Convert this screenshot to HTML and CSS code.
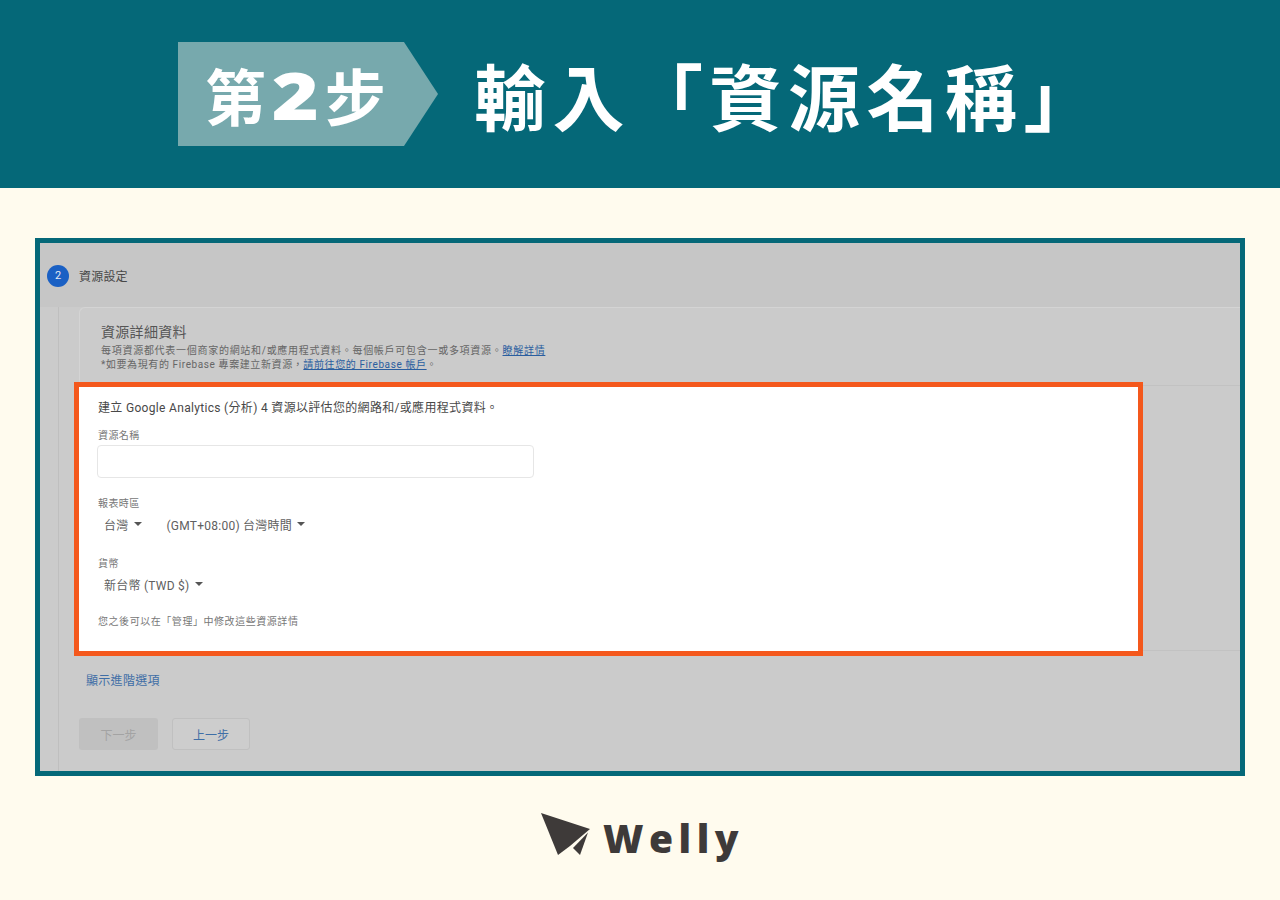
FILE: index.html
```html
<!DOCTYPE html>
<html lang="zh-Hant">
<head>
  <meta charset="UTF-8" />
  <meta name="viewport" content="width=device-width, initial-scale=1.0"/>
  <title>第2步 輸入「資源名稱」</title>
  <link rel="stylesheet" href="styles.css">
</head>
<body>
  <header class="banner">
    <div class="step-tag">第<span class="step-num">2</span>步</div>
    <h1 class="banner-title">輸入「資源名稱」</h1>
  </header>

  <main class="shot">
    <div class="step-row">
      <span class="step-circle">2</span>
      <span class="step-label">資源設定</span>
    </div>

    <div class="step-body">
      <section class="card">
        <div class="card-head">
          <h2>資源詳細資料</h2>
          <p>每項資源都代表一個商家的網站和/或應用程式資料。每個帳戶可包含一或多項資源。<a href="#">瞭解詳情</a></p>
          <p class="firebase-note">*如要為現有的 Firebase 專案建立新資源，<a href="#">請前往您的 Firebase 帳戶</a>。</p>
        </div>

        <div class="card-form">
          <div class="highlight">
            <p class="intro">建立 Google Analytics (分析) 4 資源以評估您的網路和/或應用程式資料。</p>

            <label class="field-label">資源名稱</label>
            <div class="text-input"></div>

            <label class="field-label tz-label">報表時區</label>
            <div class="select-row">
              <span class="select country">台灣<i class="caret"></i></span>
              <span class="select">(GMT+08:00) 台灣時間<i class="caret"></i></span>
            </div>

            <label class="field-label money-label">貨幣</label>
            <div class="select-row">
              <span class="select">新台幣 (TWD $)<i class="caret"></i></span>
            </div>

            <p class="hint">您之後可以在「管理」中修改這些資源詳情</p>
          </div>
        </div>
      </section>

      <a class="advanced" href="#">顯示進階選項</a>

      <div class="actions">
        <button class="btn btn-next">下一步</button>
        <button class="btn btn-back">上一步</button>
      </div>
    </div>
  </main>

  <footer class="logo">
    <svg width="50" height="44" viewBox="0 0 50 44">
      <polygon points="0,1 49,17 29,34 17,43" fill="#3e3a39"/>
      <polygon points="32,36 47,20.5 39,43" fill="#3e3a39"/>
    </svg>
    <span class="logo-text">Welly</span>
  </footer>
</body>
</html>
```

FILE: styles.css
```css
/* 1. GLOBAL */
* {
  box-sizing: border-box;
  margin: 0;
  padding: 0;
}
body {
  background-color: #fffbee;
  font-family: Roboto, "Noto Sans CJK TC", sans-serif;
  width: 1280px;
  height: 900px;
  overflow: hidden;
}

/* 2. BANNER */
.banner {
  height: 188px;
  background-color: #056878;
  display: flex;
  align-items: center;
  padding: 0 0 0 178px;
  color: #fff;
  font-family: "Noto Sans CJK TC", sans-serif;
}
.step-tag {
  width: 260px;
  height: 104px;
  padding-left: 27px;
  background-color: #77a9ad;
  clip-path: polygon(0 0, 226px 0, 100% 50%, 226px 100%, 0 100%);
  display: flex;
  align-items: center;
  font-size: 61px;
  font-weight: 700;
  line-height: 1;
}
.step-num {
  font-family: "Open Sans", sans-serif;
  font-weight: 800;
  font-size: 66px;
  margin: 0 7px;
  transform: scaleX(1.22);
  padding: 0 3px;
}
.banner-title {
  margin-left: 36px;
  font-size: 72px;
  font-weight: 700;
  letter-spacing: 6.5px;
  line-height: 1;
  white-space: nowrap;
}

/* 3. SCREENSHOT FRAME */
.shot {
  position: relative;
  width: 1210px;
  height: 538px;
  margin: 50px 35px 0;
  border: 5px solid #056878;
  background-color: #cbcbcb;
  overflow: hidden;
}
.shot::before {
  content: "";
  position: absolute;
  left: 18px;
  top: 0;
  bottom: 0;
  width: 1px;
  background-color: #bfbfbf;
}
.step-row {
  position: relative;
  height: 64px;
  padding-left: 7px;
  display: flex;
  align-items: center;
  gap: 10px;
  background-color: #c6c6c6;
}
.step-circle {
  width: 22px;
  height: 22px;
  margin-top: 1px;
  border-radius: 50%;
  background-color: #1a60c4;
  color: #e4e9f2;
  font-size: 11px;
  display: flex;
  align-items: center;
  justify-content: center;
}
.step-label {
  font-size: 12px;
  letter-spacing: 0.2px;
  color: #484848;
}
.step-body {
  position: relative;
  padding-left: 39px;
}

/* 4. CARD */
.card {
  height: 344px;
  margin-right: -20px;
  border-top: 1px solid #d4d4d4;
  border-left: 1px solid #d4d4d4;
  border-top-left-radius: 6px;
}
.card-head {
  height: 77px;
  padding: 14px 0 0 21px;
}
.card-head h2 {
  font-size: 14px;
  font-weight: 400;
  line-height: 20px;
  letter-spacing: 0.3px;
  color: #555;
  margin-bottom: 2px;
}
.card-head p {
  font-size: 10px;
  line-height: 14px;
  letter-spacing: 0.72px;
  color: #666;
}
.card-head .firebase-note {
  letter-spacing: 0.6px;
}
.card-head a {
  color: #2a5e9f;
}
.card-form {
  height: 266px;
  border-top: 1px solid #c2c2c2;
  border-bottom: 1px solid #c2c2c2;
}
.highlight {
  width: 1069px;
  height: 274px;
  margin: -4px 0 0 -6px;
  padding: 13px 0 0 19px;
  border: 5px solid #f4581c;
  background-color: #fff;
}
.intro {
  font-size: 12px;
  line-height: 17px;
  letter-spacing: 0.32px;
  color: #484848;
  margin-bottom: 12px;
}
.field-label {
  display: block;
  font-size: 10px;
  line-height: 14px;
  letter-spacing: 0.4px;
  color: #777;
}
.text-input {
  width: 437px;
  height: 33px;
  margin: 2px 0 0 -1px;
  border: 1px solid #e6e6e6;
  border-radius: 4px;
}
.tz-label {
  margin-top: 19px;
}
.money-label {
  margin-top: 23px;
}
.select-row {
  display: flex;
  gap: 25px;
  margin-top: 3px;
  padding-left: 6px;
  height: 20px;
  align-items: center;
}
.select {
  font-size: 12px;
  letter-spacing: 0.25px;
  color: #606060;
  display: flex;
  align-items: center;
}
.caret {
  width: 0;
  height: 0;
  margin-left: 5px;
  border-left: 4px solid transparent;
  border-right: 4px solid transparent;
  border-top: 4px solid #555;
}
.hint {
  margin-top: 21px;
  font-size: 10px;
  line-height: 14px;
  letter-spacing: 0.55px;
  color: #777;
}

/* 5. BELOW THE CARD */
.advanced {
  display: block;
  margin: 22px 0 0 7px;
  font-size: 12px;
  line-height: 17px;
  letter-spacing: 0.3px;
  color: #3f6ea6;
  text-decoration: none;
}
.actions {
  display: flex;
  gap: 14px;
  margin-top: 28px;
}
.btn {
  height: 32px;
  border-radius: 3px;
  font-family: inherit;
  font-size: 12px;
}
.btn-next {
  width: 79px;
  border: none;
  background-color: #c0c0c0;
  color: #a3a3a3;
}
.btn-back {
  width: 78px;
  border: 1px solid #c0c0c0;
  background-color: #cdcdcd;
  color: #3f6ea6;
}

/* 6. LOGO */
.logo {
  height: 124px;
  padding: 0 0 8px 0;
  display: flex;
  align-items: center;
  justify-content: center;
  gap: 12px;
}
.logo-text {
  font-family: "Open Sans", sans-serif;
  font-weight: 800;
  font-size: 39px;
  line-height: 1;
  letter-spacing: 5.5px;
  margin: 6px -5px 0 0;
  color: #3e3a39;
}
```
